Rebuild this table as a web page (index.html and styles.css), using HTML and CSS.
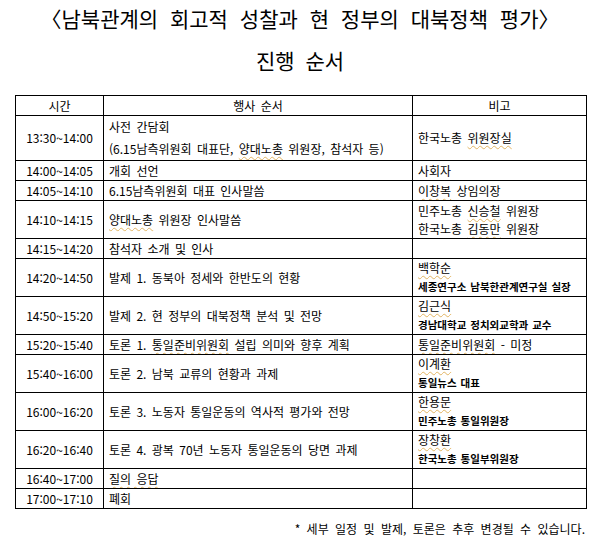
FILE: index.html
```html
<!DOCTYPE html>
<html lang="ko">
<head>
<meta charset="utf-8">
<title>진행 순서</title>
<link rel="stylesheet" href="styles.css">
</head>
<body>
<div class="page">
  <h1 class="title">〈남북관계의 회고적 성찰과 현 정부의 대북정책 평가〉</h1>
  <h2 class="subtitle">진행 순서</h2>
  <table class="schedule">
    <colgroup><col class="c-time"><col class="c-prog"><col class="c-note"></colgroup>
    <thead>
      <tr class="r-head"><th>시간</th><th>행사 순서</th><th>비고</th></tr>
    </thead>
    <tbody>
      <tr class="r-first">
        <td class="time">13:30~14:00</td>
        <td class="prog">사전 간담회<br>(6.15남측위원회 대표단, <span class="sp">양대노총</span> 위원장, 참석자 등)</td>
        <td class="note">한국노총 <span class="sp">위원장실</span></td>
      </tr>
      <tr class="r-one">
        <td class="time">14:00~14:05</td>
        <td class="prog">개회 선언</td>
        <td class="note">사회자</td>
      </tr>
      <tr class="r-one">
        <td class="time">14:05~14:10</td>
        <td class="prog">6.15남측위원회 대표 인사말씀</td>
        <td class="note"><span class="sp">이창복</span> 상임의장</td>
      </tr>
      <tr class="r-two">
        <td class="time">14:10~14:15</td>
        <td class="prog"><span class="sp">양대노총</span> 위원장 인사말씀</td>
        <td class="note">민주노총 <span class="sp">신승철</span> 위원장<br>한국노총 <span class="sp">김동만</span> 위원장</td>
      </tr>
      <tr class="r-one">
        <td class="time">14:15~14:20</td>
        <td class="prog">참석자 소개 및 인사</td>
        <td class="note"></td>
      </tr>
      <tr class="r-two">
        <td class="time">14:20~14:50</td>
        <td class="prog">발제 1. 동북아 정세와 한반도의 현황</td>
        <td class="note"><span class="sp">백학순</span><br><span class="aff">세종연구소 남북한관계연구실 실장</span></td>
      </tr>
      <tr class="r-two">
        <td class="time">14:50~15:20</td>
        <td class="prog">발제 2. 현 정부의 대북정책 분석 및 전망</td>
        <td class="note"><span class="sp">김근식</span><br><span class="aff">경남대학교 정치외교학과 교수</span></td>
      </tr>
      <tr class="r-one">
        <td class="time">15:20~15:40</td>
        <td class="prog">토론 1. <span class="sp">통일준비위원회</span> 설립 의미와 향후 계획</td>
        <td class="note"><span class="sp">통일준비위원회</span> - 미정</td>
      </tr>
      <tr class="r-two">
        <td class="time">15:40~16:00</td>
        <td class="prog">토론 2. 남북 교류의 현황과 과제</td>
        <td class="note"><span class="sp">이계환</span><br><span class="aff">통일뉴스 대표</span></td>
      </tr>
      <tr class="r-two">
        <td class="time">16:00~16:20</td>
        <td class="prog">토론 3. 노동자 통일운동의 역사적 평가와 전망</td>
        <td class="note"><span class="sp">한용문</span><br><span class="aff">민주노총 통일위원장</span></td>
      </tr>
      <tr class="r-two">
        <td class="time">16:20~16:40</td>
        <td class="prog">토론 4. 광복 70년 노동자 통일운동의 당면 과제</td>
        <td class="note"><span class="sp">장창환</span><br><span class="aff">한국노총 통일부위원장</span></td>
      </tr>
      <tr class="r-one">
        <td class="time">16:40~17:00</td>
        <td class="prog"><span class="sp">질의 응답</span></td>
        <td class="note"></td>
      </tr>
      <tr class="r-one">
        <td class="time">17:00~17:10</td>
        <td class="prog">폐회</td>
        <td class="note"></td>
      </tr>
    </tbody>
  </table>
  <p class="footnote">* 세부 일정 및 발제, 토론은 추후 변경될 수 있습니다.</p>
</div>
</body>
</html>
```

FILE: styles.css
```css
html, body {
  margin: 0;
  padding: 0;
  background: #ffffff;
}

body {
  font-family: "Noto Sans CJK KR", "Noto Sans", sans-serif;
  color: #000000;
}

.page {
  width: 600px;
  padding-top: 4px;
}

.title {
  margin: 0;
  font-size: 21px;
  font-weight: 400;
  line-height: 28px;
  text-align: center;
  word-spacing: 6px;
}

.subtitle {
  margin: 14px 0 0;
  font-size: 21px;
  font-weight: 400;
  line-height: 28px;
  text-align: center;
  word-spacing: 5px;
}

.schedule {
  margin: 21px 0 0 15px;
  width: 571px;
  border-collapse: collapse;
  table-layout: fixed;
  font-size: 12px;
  word-spacing: 2px;
}

.c-time { width: 88px; }
.c-prog { width: 309px; }
.c-note { width: 174px; }

.schedule th,
.schedule td {
  border: 1px solid #000000;
  padding: 0 5px;
  font-weight: 400;
  line-height: 18px;
  white-space: nowrap;
  overflow: hidden;
}

.schedule th {
  text-align: center;
  height: 19px;
}

.schedule td.time {
  text-align: center;
  padding: 0;
}

.r-one td { height: 19px; }
.r-two td { height: 37px; }
.r-first td { height: 43px; }
.r-first td.prog { line-height: 22px; }

.note .aff {
  font-size: 10.5px;
  font-weight: 700;
  word-spacing: 1px;
}

.sp {
  text-decoration: underline wavy #e2b563;
  text-decoration-thickness: 1px;
  text-underline-offset: 2px;
}

.footnote {
  margin: 12px 15px 0 0;
  font-size: 12px;
  line-height: 16px;
  text-align: right;
  word-spacing: 3px;
}
```
